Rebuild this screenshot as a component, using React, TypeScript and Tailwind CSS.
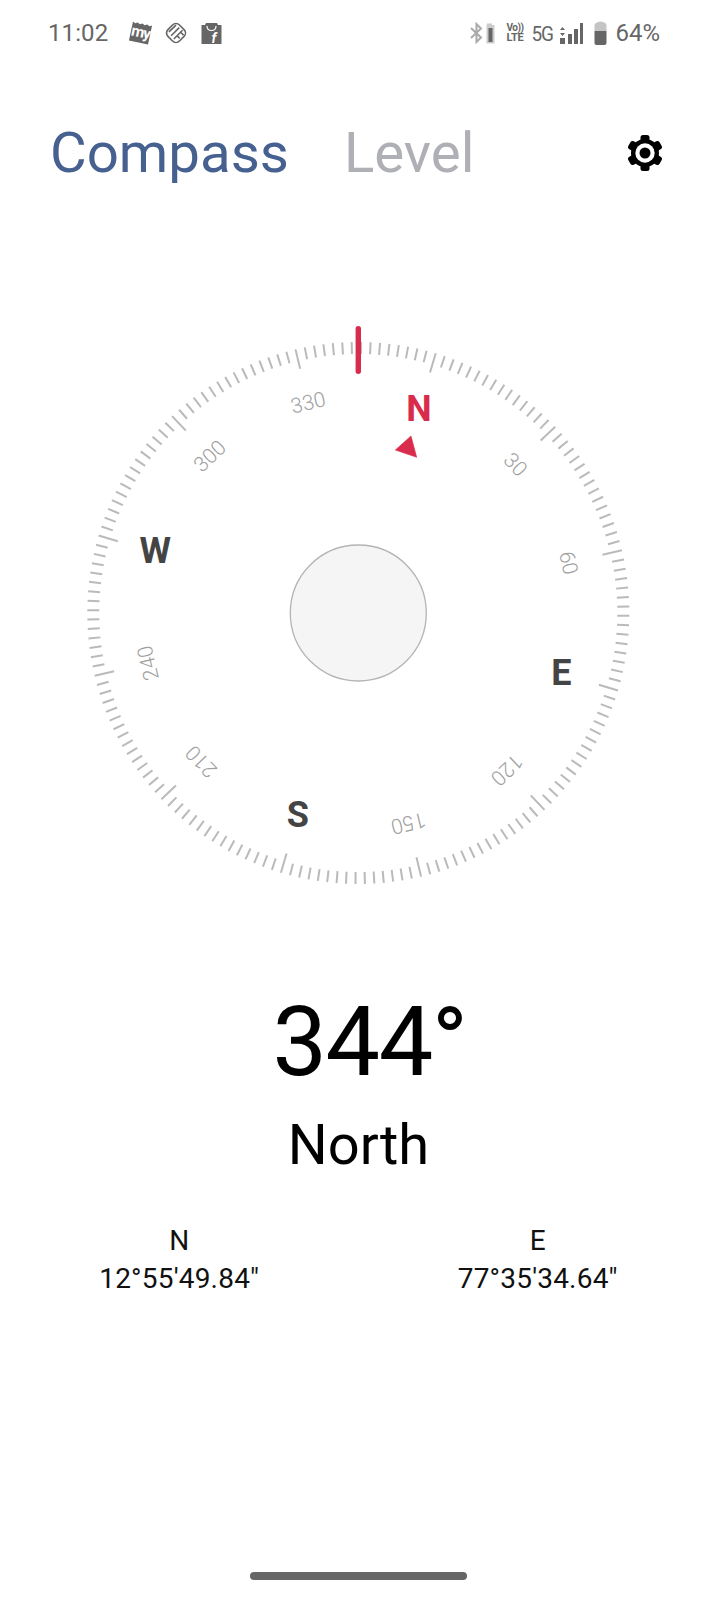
const ROTATION = 16.6;
const CX = 358.3;
const CY = 313;

const TICKS = Array.from({ length: 180 }, (_, i) => i * 2);
const DEGREE_LABELS = [30, 60, 120, 150, 210, 240, 300, 330];
const CARDINALS = [
  { text: 'N', angle: 0, fill: '#d92b4b' },
  { text: 'E', angle: 90, fill: '#444444' },
  { text: 'S', angle: 180, fill: '#444444' },
  { text: 'W', angle: 270, fill: '#444444' },
];

function polar(angle: number, r: number) {
  const rad = ((angle + ROTATION) * Math.PI) / 180;
  return { x: CX + r * Math.sin(rad), y: CY - r * Math.cos(rad) };
}

function Dial() {
  return (
    <svg width="717" height="600" viewBox="0 0 717 600" className="block">
      {/* Tick ring */}
      {TICKS.map(a => {
        const inner = a % 30 === 0 ? 251 : 259;
        const p1 = polar(a, 271);
        const p2 = polar(a, inner);
        return (
          <line
            key={a}
            x1={p1.x}
            y1={p1.y}
            x2={p2.x}
            y2={p2.y}
            stroke="#bababa"
            strokeWidth="2"
          />
        );
      })}

      {/* Fixed heading marker */}
      <rect x="355.6" y="26" width="5.4" height="48" rx="2.7" fill="#d92b4b" />

      {DEGREE_LABELS.map(a => {
        const p = polar(a, 216);
        return (
          <text
            key={a}
            x={p.x}
            y={p.y}
            fontSize="21"
            fontWeight="300"
            fill="#a0a0a0"
            textAnchor="middle"
            dominantBaseline="central"
            transform={`rotate(${a + ROTATION} ${p.x} ${p.y})`}
          >
            {a}
          </text>
        );
      })}

      {CARDINALS.map(c => {
        const p = polar(c.angle, 212);
        return (
          <text
            key={c.text}
            x={p.x}
            y={p.y - 1}
            fontSize="36"
            fontWeight="700"
            fill={c.fill}
            textAnchor="middle"
            dominantBaseline="central"
          >
            {c.text}
          </text>
        );
      })}

      <polygon points="411,136 395.3,150 416.7,157.3" fill="#d92b4b" stroke="#d92b4b" strokeWidth="0.6" strokeLinejoin="round" />

      <circle cx={CX} cy={CY} r="68" fill="#f5f5f5" stroke="#b4b4b4" strokeWidth="1.3" />
    </svg>
  );
}

function GearIcon() {
  return (
    <svg width="38" height="38" viewBox="0 0 38 38">
      <circle cx="19" cy="19" r="14" fill="#000" />
      {[0, 60, 120, 180, 240, 300].map(a => (
        <rect key={a} x="14.5" y="1" width="9" height="10" rx="2.5" fill="#000" transform={`rotate(${a} 19 19)`} />
      ))}
      <circle cx="19" cy="19" r="9.7" fill="#fff" />
      <circle cx="19" cy="19" r="5.5" fill="#000" />
    </svg>
  );
}

function NotificationIcons() {
  return (
    <div className="flex items-center ml-[19px]">
      {/* my */}
      <svg width="27" height="26" viewBox="0 0 24 24">
        <g transform="rotate(12 12 12)">
          <path d="M3 3 l2.25 1.2 2.25-1.2 2.25 1.2 2.25-1.2 2.25 1.2 2.25-1.2 2.25 1.2 2.25-1.2 V21 H3 Z" fill="#666" />
          <text x="12" y="16" fontSize="14" fontWeight="700" fill="#fff" textAnchor="middle" letterSpacing="-1">my</text>
        </g>
      </svg>
      {/* striped diamond mark */}
      <svg width="26" height="26" viewBox="0 0 24 24" className="ml-[9px]" fill="none" stroke="#666" strokeWidth="1.5">
        <rect x="4.5" y="4.5" width="15" height="15" rx="4.5" transform="rotate(45 12 12)" />
        <path d="M5.5 11 L12 4.8 M7.5 14.5 L15 7 M10 17.5 L18 9.5 M13 14.5 L15.5 17 M16.5 11.5 L19 14" />
      </svg>
      {/* bag with f */}
      <svg width="21" height="22" viewBox="0 0 21 22" className="ml-[12px]">
        <path d="M0.5 3 H20.5 V22 H0.5 Z" fill="#666" />
        <path d="M5 1.5 H16 M6 4 C6 10 15 10 15 4" fill="none" stroke="#fff" strokeWidth="1.2" />
        <path d="M5 1 H16 L17 3 H4 Z" fill="#666" />
        <text x="13" y="20.5" fontSize="14" fontWeight="700" fontStyle="italic" fill="#fff" textAnchor="middle">f</text>
      </svg>
    </div>
  );
}

function SystemIcons() {
  return (
    <div className="flex items-center">
      {/* bluetooth + small battery */}
      <svg width="26" height="22" viewBox="0 0 26 22" className="mr-[9px]">
        <path d="M1 6 L11 15.5 L6.5 20 V2 L11 6.5 L1 16" fill="none" stroke="#aaa" strokeWidth="2" />
        <path d="M17 3 V1.5 H22 V3 H24.5 V21.5 H16.5 V3 Z" fill="#ccc" />
        <rect x="18.5" y="6" width="4" height="14" fill="#666" />
      </svg>
      {/* VoLTE */}
      <div className="w-[19px] flex flex-col items-center text-[#666] font-bold mr-[7px]">
        <span className="text-[10px] leading-[10px] tracking-[-0.5px]">Vo))</span>
        <span className="text-[11px] leading-[10px] tracking-[-0.3px]">LTE</span>
      </div>
      {/* 5G */}
      <span className="text-[19px] leading-none font-normal text-[#666] w-[20px] mr-[8px] tracking-[-1px] scale-y-110">5G</span>
      {/* signal */}
      <svg width="24" height="21" viewBox="0 0 24 21" className="mr-[11px]">
        <path d="M3.5 4 L6 7 H1 Z M3.5 13 L6 10 H1 Z" fill="#666" />
        <rect x="1" y="15" width="5" height="6" fill="#666" />
        <rect x="9" y="11" width="4" height="10" fill="#666" />
        <rect x="15" y="6" width="4" height="15" fill="#666" />
        <rect x="21" y="0" width="3" height="21" fill="#666" />
      </svg>
      {/* battery */}
      <svg width="13" height="24" viewBox="0 0 13 24" className="mr-[8px]">
        <path d="M4 1 Q6.5 -0.2 9 1 L11 2 Q12.5 2.5 12.5 4 V10 H0.5 V4 Q0.5 2.5 2 2 Z" fill="#c4c4c4" />
        <path d="M0.5 10 H12.5 V22 Q12.5 24 10.5 24 H2.5 Q0.5 24 0.5 22 Z" fill="#666" />
      </svg>
      <span className="text-[24px] leading-none text-[#666]">64%</span>
    </div>
  );
}

function CoordinateColumn({ label, value }: { label: string; value: string }) {
  return (
    <div className="flex flex-col items-center text-[28px] leading-[38px] tracking-[0.2px] text-[#111]">
      <span>{label}</span>
      <span>{value}</span>
    </div>
  );
}

export default function App() {
  return (
    <div className="w-[717px] h-[1600px] flex flex-col bg-white font-[Roboto,sans-serif]">
      {/* Status bar */}
      <div className="h-[66px] flex items-center justify-between pl-[48px] pr-[57px]">
        <div className="flex items-center">
          <span className="text-[24px] leading-none text-[#666] tracking-[0.1px]">11:02</span>
          <NotificationIcons />
        </div>
        <SystemIcons />
      </div>

      {/* Tabs */}
      <div className="h-[174px] flex items-center pl-[50px] pr-[53px]">
        <span className="text-[56.4px] leading-none text-[#46608f]">Compass</span>
        <span className="text-[56.4px] leading-none text-[#aeb0b5] ml-[55px]">Level</span>
        <div className="ml-auto">
          <GearIcon />
        </div>
      </div>

      <div className="mt-[60px]">
        <Dial />
      </div>

      {/* Heading */}
      <div className="mt-[94px] flex flex-col items-center">
        <span className="text-[97px] leading-none text-black pl-[22px] tracking-[-1.5px]">344°</span>
        <span className="text-[56px] leading-none text-black mt-[26px]">North</span>
      </div>

      <div className="grid grid-cols-2 mt-[49px]">
        <CoordinateColumn label="N" value={'12°55\'49.84"'} />
        <CoordinateColumn label="E" value={'77°35\'34.64"'} />
      </div>

      <div className="mt-auto mb-[20px] self-center ml-[-1px] w-[217px] h-[8px] rounded-full bg-[#666]" />
    </div>
  );
}
